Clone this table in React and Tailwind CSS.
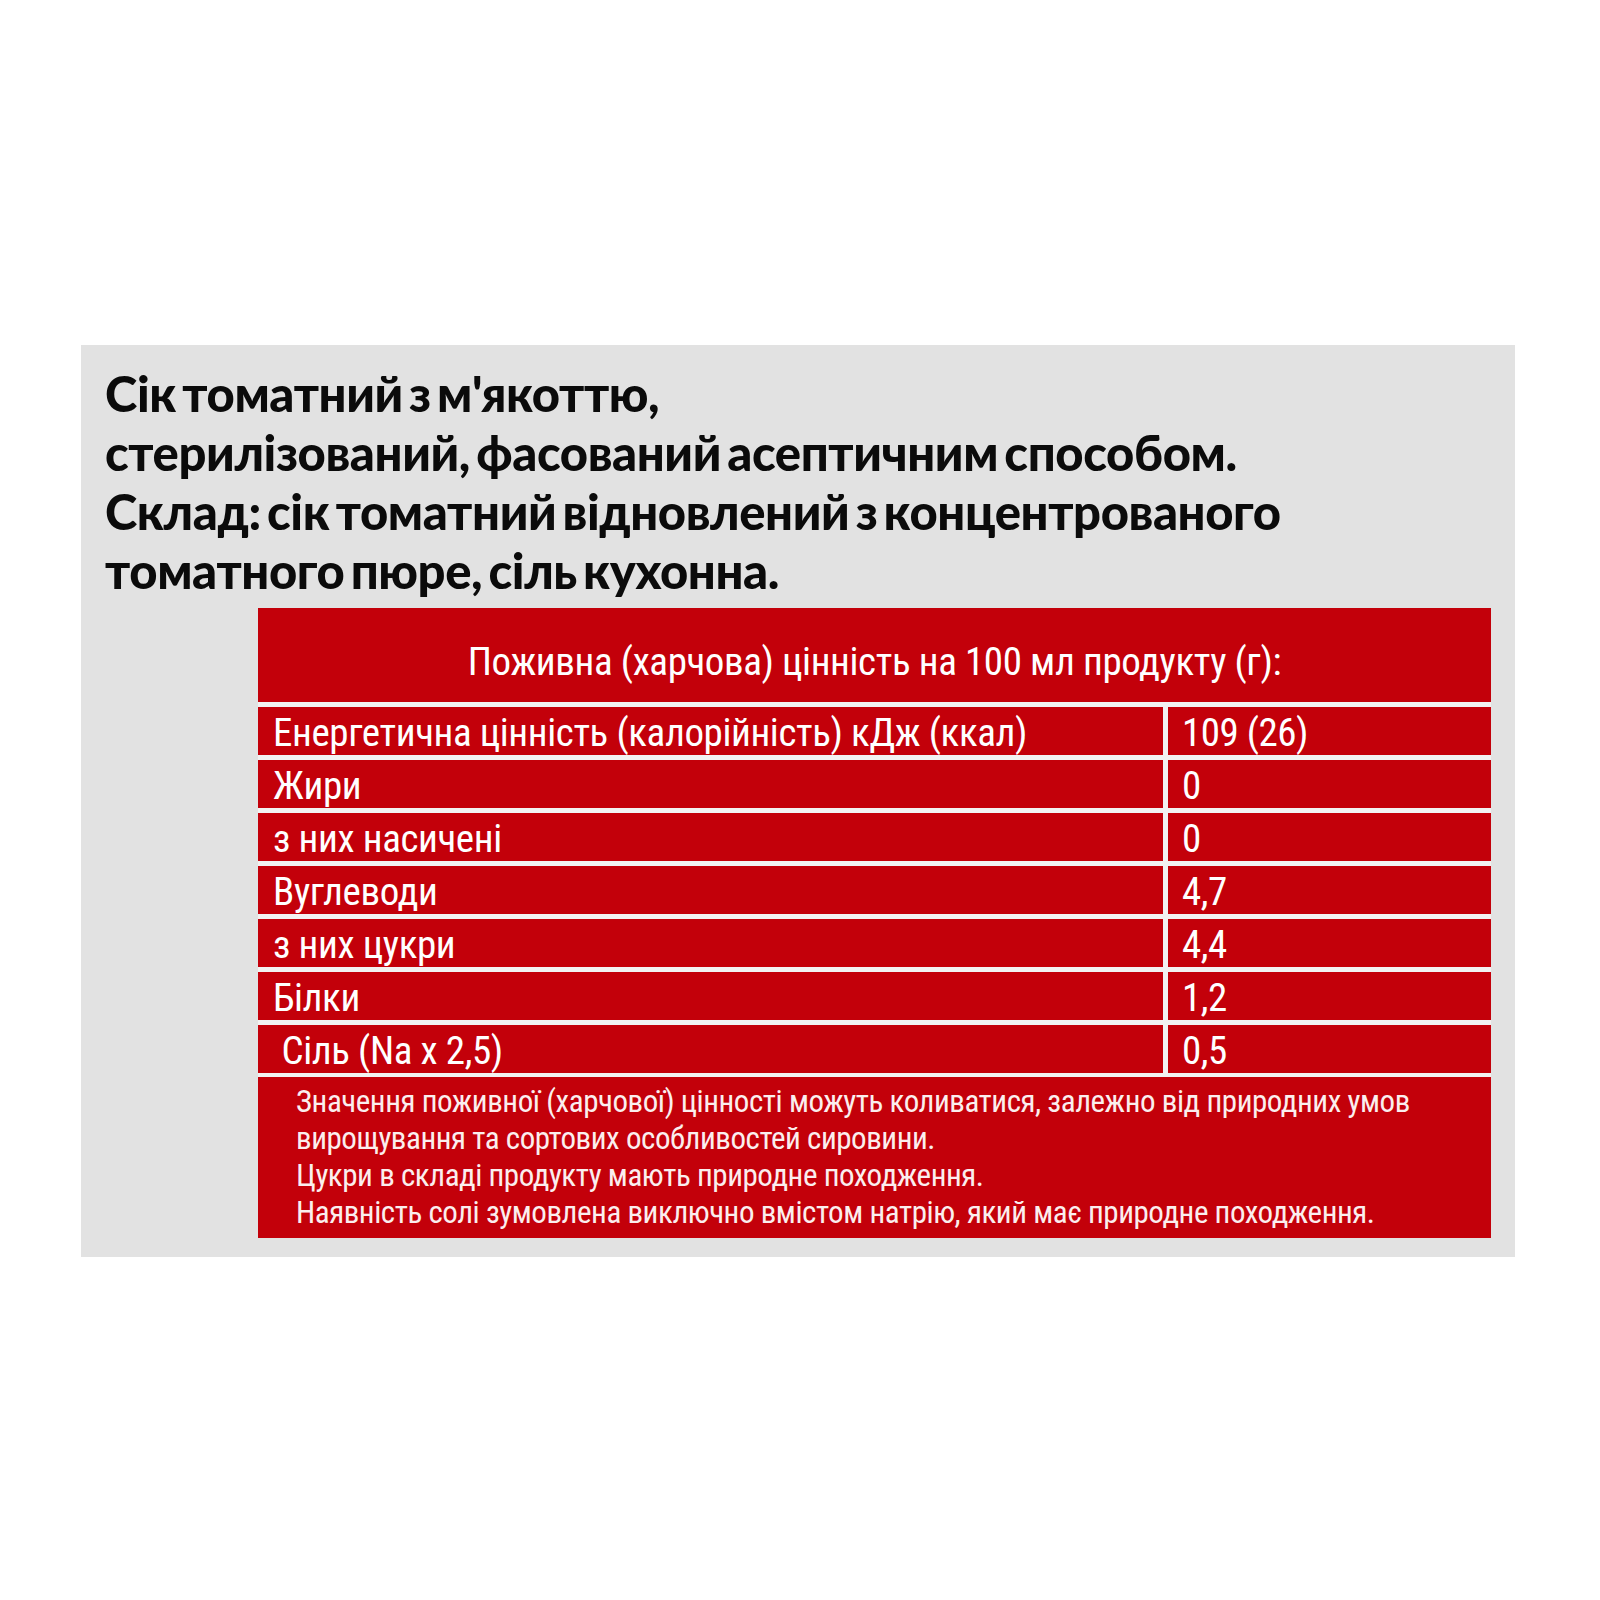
export default function App() {
  const rows = [
    ["Енергетична цінність (калорійність) кДж (ккал)", "109 (26)"],
    ["Жири", "0"],
    ["з них насичені", "0"],
    ["Вуглеводи", "4,7"],
    ["з них цукри", "4,4"],
    ["Білки", "1,2"],
    ["\u00a0Сіль (Na x 2,5)", "0,5"],
  ];
  const cond = { fontFamily: "'Liberation Sans Narrow', 'Roboto Condensed', Roboto, sans-serif" };
  return (
    <div className="w-[1600px] h-[1600px] bg-white pt-[345px] pl-[81px]">
      <div className="w-[1434px] h-[912px] bg-[#e2e2e2] pt-[19px]">
        <div
          className="pl-[24px] text-[49px] leading-[59px] font-black tracking-[-0.4px] [word-spacing:-5px] text-[#0b0b0b]"
          style={{ fontFamily: "Lato, 'Open Sans', sans-serif" }}
        >
          <div>Сік томатний з м'якоттю,</div>
          <div>стерилізований, фасований асептичним способом.</div>
          <div>Склад: сік томатний відновлений з концентрованого</div>
          <div>томатного пюре, сіль кухонна.</div>
        </div>
        <div
          className="ml-[177px] mt-[8px] w-[1233px] bg-[#f2f2f2] flex flex-col gap-[5px] text-white font-stretch-condensed"
          style={cond}
        >
          <div className="h-[94px] bg-[#c3000a] pt-[30px] text-center text-[39px] leading-[48px] tracking-[-0.4px]">
            Поживна (харчова) цінність на 100 мл продукту (г):
          </div>
          {rows.map(([l, v], i) => (
            <div key={i} className="h-[48px] flex gap-[5px]">
              <div className="w-[905px] bg-[#c3000a] pl-[15px] pt-[2px] text-[39px] leading-[48px] tracking-[-0.4px] whitespace-pre">
                {l}
              </div>
              <div className="flex-1 bg-[#c3000a] pl-[14px] pt-[2px] text-[39px] leading-[48px] tracking-[-0.5px]">
                {v}
              </div>
            </div>
          ))}
          <div className="h-[161px] mt-[-1px] bg-[#c3000a] pl-[38px] pt-[6px] text-[31px] leading-[37px] tracking-[-0.45px] text-[#fbeeee]">
            <div>Значення поживної (харчової) цінності можуть коливатися, залежно від природних умов</div>
            <div>вирощування та сортових особливостей сировини.</div>
            <div>Цукри в складі продукту мають природне походження.</div>
            <div>Наявність солі зумовлена виключно вмістом натрію, який має природне походження.</div>
          </div>
        </div>
      </div>
    </div>
  );
}
